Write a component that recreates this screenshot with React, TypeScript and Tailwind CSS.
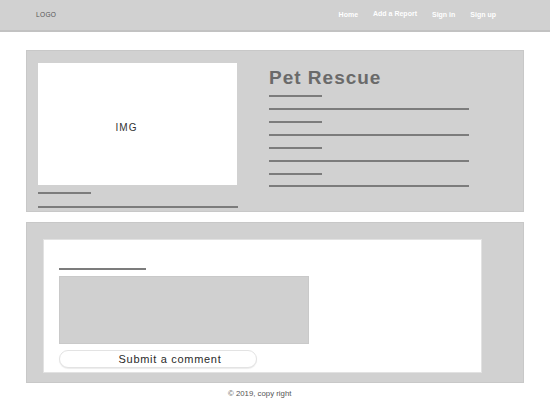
import React from "react";

const Line = ({ w, className = "" }: { w: string; className?: string }) => (
  <div className={`h-[2px] bg-[#7c7c7c] ${w} ${className}`} />
);

export default function App() {
  return (
    <div
      className="w-[550px] h-[400px] bg-white overflow-hidden"
      style={{ fontFamily: '"Liberation Sans", Arial, sans-serif' }}
    >
      <header className="h-[32px] bg-[#d1d1d1] border-b-[2px] border-[#c2c2c2] flex items-center pl-[36px] pr-[54px]">
        <span className="text-[6.6px] text-[#555] tracking-[0.3px]">LOGO</span>
        <nav className="ml-auto flex items-center gap-[15px] text-[7px] font-bold text-white">
          <span>Home</span>
          <span className="-translate-y-[1px]">Add a Report</span>
          <span>Sign in</span>
          <span>Sign up</span>
        </nav>
      </header>

      <section className="mx-[26px] mt-[18px] h-[162px] bg-[#d1d1d1] border border-[#c8c8c8] pl-[11px] pt-[12px] flex">
        <div className="w-[200px] flex flex-col">
          <div className="h-[122px] w-[199px] bg-white flex items-center justify-center pr-[22px] pt-[6px]">
            <span className="text-[10px] text-[#333] tracking-[1px]">IMG</span>
          </div>
          <Line w="w-[53px]" className="mt-[7px]" />
          <Line w="w-[200px]" className="mt-[12px]" />
        </div>
        <div className="ml-[31px] flex flex-col">
          <h1 className="text-[19px] leading-[20px] font-bold text-[#6a6a6a] tracking-[1px] mt-[5px]">
            Pet Rescue
          </h1>
          <Line w="w-[53px]" className="mt-[7px]" />
          <Line w="w-[200px]" className="mt-[11px]" />
          <Line w="w-[53px]" className="mt-[11px]" />
          <Line w="w-[200px]" className="mt-[11px]" />
          <Line w="w-[53px]" className="mt-[11px]" />
          <Line w="w-[200px]" className="mt-[11px]" />
          <Line w="w-[53px]" className="mt-[11px]" />
          <Line w="w-[200px]" className="mt-[10px]" />
        </div>
      </section>

      <section className="mx-[26px] mt-[10px] h-[161px] bg-[#d1d1d1] border border-[#c8c8c8] pl-[16px] pt-[16px] pr-[41px] pb-[9px]">
        <div className="h-full bg-white border border-[#e2e2e2] pl-[15px] pt-[28px]">
          <Line w="w-[87px]" />
          <div className="mt-[6px] w-[250px] h-[68px] bg-[#d0d0d0] border border-[#c9c9c9]" />
          <button className="mt-[6px] w-[198px] h-[18px] rounded-full bg-white border border-[#e3e3e3] shadow-[0_1px_1px_rgba(0,0,0,0.08)] flex items-center justify-center pl-[24px] text-[11px] text-[#2a2a2a] tracking-[0.7px]">
            Submit a comment
          </button>
        </div>
      </section>

      <footer className="pl-[228px] pt-[5px] text-[7.8px] text-[#555]">
        © 2019, copy right
      </footer>
    </div>
  );
}
